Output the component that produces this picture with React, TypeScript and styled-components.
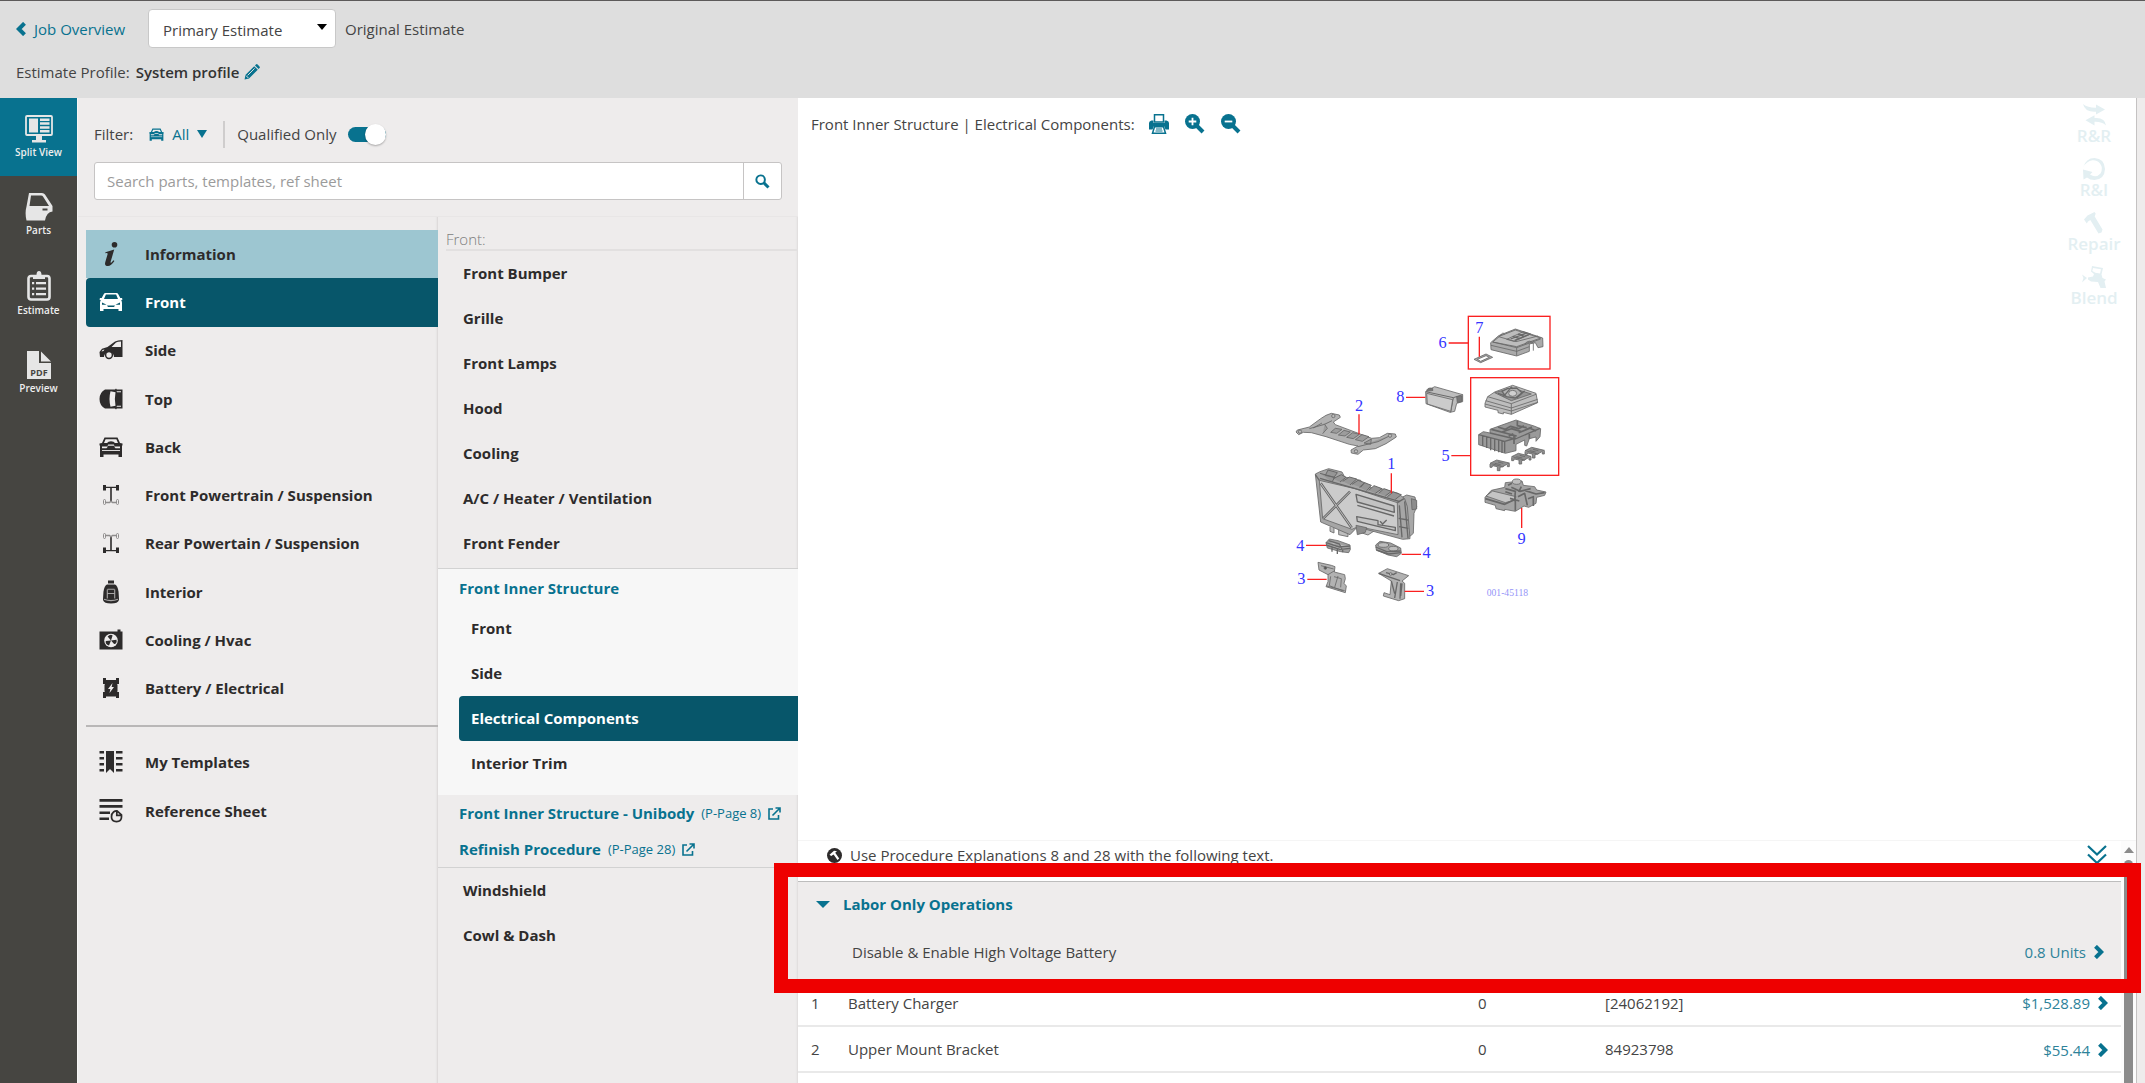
import React, { useState } from "react";
import styled, { createGlobalStyle, css } from "styled-components";

const c = {
  teal: "#08728f",
  tealDark: "#07566a",
  tealSoft: "#9dc6d1",
  panel: "#eeecec",
  header: "#dedede",
  rail: "#464541",
  text: "#444444",
  strong: "#2d2b2b",
  line: "#d2d2d2",
};

const Global = createGlobalStyle`
  * { box-sizing: border-box; }
  body { margin: 0; background: ${c.panel}; }
  body, button, input, select { font-family: "Open Sans", "Noto Sans", sans-serif; font-size: 15px; line-height: 20px; color: ${c.text}; }
  button { border: 0; background: none; padding: 0; cursor: pointer; text-align: left; }
  a { text-decoration: none; color: ${c.teal}; }
  ul { list-style: none; margin: 0; padding: 0; }
  svg { display: block; flex: none; }
`;

const Page = styled.div`
  display: flex;
  flex-direction: column;
  height: 100vh;
  overflow: hidden;
`;
const Header = styled.header`
  flex: none;
  height: 98px;
  padding: 8px 16px;
  background: ${c.header};
  border-top: 1px solid #5c5a5a;
`;
const HeaderRow = styled.div<{ $tall?: boolean }>`
  display: flex;
  align-items: center;
  height: ${(p) => (p.$tall ? 39 : 48)}px;
`;
const BackLink = styled.a`
  display: flex;
  align-items: center;
  gap: 8px;
  width: 132px;
`;
const SelectWrap = styled.label`
  position: relative;
  width: 188px;
  margin-right: 9px;
`;
const Select = styled.select`
  appearance: none;
  width: 100%;
  height: 39px;
  padding: 2px 14px 0;
  background: #fff;
  border: 1px solid #c8c8c8;
  border-radius: 4px;
`;
const SelectArrow = styled.span`
  position: absolute;
  right: 9px;
  top: 15px;
  border: 5px solid transparent;
  border-top: 6px solid #000;
  border-bottom: 0;
  pointer-events: none;
`;
const ProfileName = styled.strong`
  margin: 0 5px 0 6px;
  font-weight: 600;
  color: #333;
`;
const Body = styled.div`
  display: flex;
  flex: 1;
  min-height: 0;
`;
const Rail = styled.nav`
  flex: none;
  width: 78px;
  background: ${c.rail};
  border-right: 1px solid #f7f6f6;
`;
const RailButton = styled.button<{ $active?: boolean }>`
  display: flex;
  flex-direction: column;
  align-items: center;
  gap: 2px;
  width: 100%;
  padding: 17px 0;
  background: ${(p) => (p.$active ? c.teal : "transparent")};
  color: #eee;
  font-size: 10px;
  line-height: 14px;
  font-weight: 600;
`;
const Catalog = styled.section`
  display: flex;
  flex-direction: column;
  flex: none;
  width: 720px;
  background: ${c.panel};
`;
const Filters = styled.div`
  padding: 19px 16px 16px;
  border-bottom: 1px solid #e8e6e6;
`;
const FilterRow = styled.div`
  display: flex;
  align-items: center;
  height: 34px;
  margin-bottom: 11px;
`;
const FilterButton = styled.button`
  display: flex;
  align-items: center;
  gap: 8px;
  margin-left: 16px;
  color: ${c.teal};
`;
const Divider = styled.span`
  width: 2px;
  height: 27px;
  margin: 0 12px 0 16px;
  background: #cfcdcd;
`;
const SwitchLabel = styled.label`
  display: flex;
  align-items: center;
  gap: 11px;
`;
const Switch = styled.input`
  appearance: none;
  display: flex;
  align-items: center;
  width: 38px;
  height: 15px;
  margin: 0;
  border-radius: 8px;
  background: ${c.teal};
  &::after {
    content: "";
    width: 21px;
    height: 21px;
    border-radius: 50%;
    background: #fff;
    box-shadow: 0 1px 2px rgba(0, 0, 0, 0.3);
  }
  &:checked::after { margin-left: auto; }
  &:not(:checked) { background: #aaa; }
`;
const Search = styled.form`
  display: flex;
  height: 38px;
  background: #fff;
  border: 1px solid #c6c4c4;
  border-radius: 3px;
`;
const SearchInput = styled.input`
  flex: 1;
  min-width: 0;
  padding: 0 12px;
  border: 0;
  background: transparent;
  &::placeholder { color: #9b9b9b; opacity: 1; }
`;
const SearchButton = styled.button`
  display: flex;
  align-items: center;
  justify-content: center;
  width: 38px;
  border-left: 1px solid #c6c4c4;
`;
const Columns = styled.div`
  display: flex;
  flex: 1;
  min-height: 0;
`;
const GroupColumn = styled.nav`
  flex: none;
  width: 360px;
  padding: 13px 0 0 8px;
  box-shadow: inset -3px 0 2px -2px #d8d6d6;
`;
const GroupList = styled.ul<{ $second?: boolean }>`
  display: grid;
  grid-auto-rows: 1fr;
  height: ${(p) => (p.$second ? 98 : 483)}px;
`;
const GroupButton = styled.button<{ $tone?: string }>`
  display: flex;
  align-items: center;
  gap: 22px;
  width: 100%;
  height: 100%;
  padding: 0 0 1px 13px;
  font-weight: 700;
  color: ${c.strong};
  ${(p) => p.$tone === "soft" && css`background: ${c.tealSoft};`}
  ${(p) => p.$tone === "active" && css`background: ${c.tealDark}; color: #fff; border-radius: 4px 0 0 4px;`}
`;
const Rule = styled.hr`
  margin: 12px 0 11px;
  border: 0;
  height: 2px;
  background: #b9b7b7;
`;
const SectionColumn = styled.nav`
  flex: 1;
  min-width: 0;
  box-shadow: inset -3px 0 2px -2px #dddbdb;
`;
const Crumb = styled.div`
  margin: 12px 0 0 8px;
  border-bottom: 2px solid #e2e0e0;
  font-weight: 300;
  color: #7c7c7c;
`;
const SectionList = styled.div`
  padding-bottom: 2px;
`;
const SectionButton = styled.button<{ $sub?: boolean; $active?: boolean }>`
  display: block;
  width: ${(p) => (p.$sub ? "calc(100% - 21px)" : "100%")};
  height: 45px;
  margin-left: ${(p) => (p.$sub ? 21 : 0)}px;
  padding: 0 0 2px ${(p) => (p.$sub ? 12 : 25)}px;
  font-weight: 700;
  color: ${(p) => (p.$active ? "#fff" : c.strong)};
  background: ${(p) => (p.$active ? c.tealDark : "transparent")};
  border-radius: 4px 0 0 4px;
`;
const OpenSection = styled.div`
  padding-bottom: 9px;
  background: #f7f7f7;
  border-top: 1px solid ${c.line};
`;
const OpenTitle = styled.button`
  display: block;
  height: 37px;
  padding-left: 21px;
  font-weight: 700;
  color: ${c.teal};
`;
const Procedures = styled.div`
  display: flex;
  flex-direction: column;
  padding-left: 21px;
  border-bottom: 1px solid ${c.line};
`;
const ProcedureLink = styled.a`
  display: flex;
  align-items: center;
  gap: 7px;
  height: 36px;
  font-weight: 700;
`;
const PageRef = styled.span`
  font-size: 13px;
  font-weight: 400;
`;
const Detail = styled.main`
  display: flex;
  flex-direction: column;
  flex: 1;
  min-width: 0;
  margin-right: 8px;
  background: #fff;
  border-right: 1px solid #c4c2c2;
`;
const Viewer = styled.section`
  display: flex;
  flex: 1;
  min-height: 0;
`;
const Stage = styled.div`
  display: flex;
  flex-direction: column;
  flex: 1;
`;
const Toolbar = styled.div`
  display: flex;
  align-items: center;
  height: 52px;
  padding-left: 13px;
`;
const Tools = styled.div`
  display: flex;
  gap: 16px;
  margin-left: 14px;
`;
const Canvas = styled.div`
  display: flex;
  align-items: center;
  justify-content: center;
  flex: 1;
  padding-bottom: 80px;
`;
const Actions = styled.div`
  display: flex;
  flex-direction: column;
  width: 82px;
  padding: 6px 2px 0 0;
`;
const Action = styled.button`
  display: flex;
  flex-direction: column;
  align-items: center;
  height: 54px;
  font-weight: 600;
  font-size: 17px;
  color: #e3eff2;
`;
const Lower = styled.section`
  display: flex;
  flex: none;
  height: 243px;
  border-top: 1px solid #f5f5f5;
`;
const Lines = styled.div`
  flex: 1;
  min-width: 0;
  overflow: hidden;
`;
const Note = styled.div`
  display: flex;
  align-items: center;
  gap: 8px;
  height: 40px;
  padding: 0 14px 12px 29px;
`;
const NoteText = styled.span`
  flex: 1;
`;
const Labor = styled.div`
  height: 99px;
  background: ${c.panel};
  border-top: 1px solid #bdbdbd;
`;
const LaborTitle = styled.button`
  display: flex;
  align-items: center;
  gap: 13px;
  height: 44px;
  padding-left: 18px;
  font-weight: 700;
  color: ${c.teal};
`;
const LaborRow = styled.div`
  display: flex;
  align-items: center;
  justify-content: space-between;
  height: 52px;
  padding: 0 17px 0 54px;
`;
const Amount = styled.button`
  display: inline-flex;
  align-items: center;
  gap: 8px;
  color: #2d8299;
  vertical-align: middle;
`;
const Parts = styled.table`
  width: 100%;
  table-layout: fixed;
  border-collapse: collapse;
`;
const Cell = styled.td<{ $kind?: "num" | "name" | "price" }>`
  height: 46px;
  padding: 0;
  border-bottom: 2px solid #e9e9e9;
  ${(p) => p.$kind === "num" && css`padding-left: 13px;`}
  ${(p) => p.$kind === "name" && css`padding-left: 5px;`}
  ${(p) => p.$kind === "price" && css`padding-right: 13px; text-align: right;`}
`;
const Col = styled.col<{ $w?: string }>`
  width: ${(p) => p.$w || "auto"};
`;
const ScrollTrack = styled.div`
  display: flex;
  flex-direction: column;
  align-items: center;
  width: 15px;
  padding-top: 6px;
  background: #fcfcfc;
`;
const ScrollThumb = styled.div`
  flex: 1;
  width: 9px;
  margin-top: 7px;
  border-radius: 5px 5px 0 0;
  background: #8b8b8b;
`;
const Highlight = styled.div`
  position: absolute;
  left: 774px;
  right: 4px;
  bottom: 90px;
  height: 130px;
  border: 14px solid #ee0000;
  pointer-events: none;
`;

/* ---------- icons ---------- */

const Chevron = ({ left }: { left?: boolean }) => (
  <svg width="10" height="14" viewBox="0 0 10 14" fill="none" stroke={c.teal} strokeWidth="4">
    <path d={left ? "M8.5 1.3 2.8 7l5.7 5.7" : "M1.5 1.3 7.2 7l-5.7 5.7"} />
  </svg>
);
const Pencil = () => (
  <svg width="16" height="16" viewBox="0 0 16 16">
    <path fill={c.teal} d="M10.2 2.2 13.8 5.8 5 14.6 0.6 15.4 1.4 11z M11 1.4l.9-.9q.8-.8 1.7 0L15.500 2.400q.8.8 0 1.700l-.9.9z" />
    <path d="M3.600 11.400 10.600 4.400M2 11.600l2.400 2.400" stroke="#dedede" strokeWidth="1" fill="none" />
  </svg>
);
const Triangle = ({ w, h }: { w: number; h: number }) => (
  <svg width={w} height={h} viewBox="0 0 10 8" preserveAspectRatio="none">
    <path d="M0 0h10L5 8z" fill={c.teal} />
  </svg>
);
const CarBack = ({ size = 24 }: { size?: number }) => (
  <svg width={size} height={size} viewBox="0 0 24 24" fill="currentColor">
    <path fillRule="evenodd" d="M5.500 2.500h13l2.500 5.500 2.500.5v2H23V22h-3.500v-2.500h-15V22H1V10.500H.5v-2L3 8zM6.600 4.200 5 8h3q1-1.800 4-1.800T16 8h3l-1.600-3.800zM3 11.500v1.700h4.500l1.500-1.700zm12 0 1.500 1.700H21v-1.700zM9.200 9.500h5.600l.7 1.200h-7z" />
    <path d="M3 15.500h18" stroke={c.panel} strokeWidth=".9" />
  </svg>
);
const CarFront = () => (
  <svg width="24" height="24" viewBox="0 0 24 24" fill="currentColor">
    <path fillRule="evenodd" d="M6.500 3h11q1.200 0 1.800 1.200L21.300 8H23l.5 1.500-1.300.8Q23 11.500 23 13v8h-3.500v-2h-15v2H1v-8q0-1.500.8-2.700L.5 9.500 1 8h1.700l2-3.800Q5.300 3 6.500 3zm.4 1.600L5 9h14l-1.900-4.400zM3 12.600v2.200h4.600zM21 12.600v2.200h-4.600zM8 15.600l1 1.400h6l1-1.400z" />
  </svg>
);
const I = ({ children }: { children: React.ReactNode }) => (
  <svg width="24" height="24" viewBox="0 0 24 24" fill="currentColor">{children}</svg>
);
const Axle = ({ flip }: { flip?: boolean }) => (
  <I>
    <g transform={flip ? "rotate(180 12 12)" : undefined}>
      <path d="M4 2h3v5.500H4zM17 2h3v5.500h-3zM7 3.800h10v1.200H7z" />
      <path d="M11.200 4h1.600v14.500h-1.600z" />
      <g fill="none" stroke="#8f8d8d"><rect x="4.500" y="16.500" width="2" height="5" rx="1" /><rect x="17.500" y="16.500" width="2" height="5" rx="1" /><path d="M6.500 19.500h4l1.500-1.300 1.500 1.300h4" strokeWidth="1.400" /></g>
    </g>
  </I>
);
const icons: Record<string, React.ReactNode> = {
  Information: (
    <I><circle cx="15.500" cy="2.800" r="2.800" /><path d="M6.500 10.200 15.200 7.600 11.700 19.500q-.5 2 1 .7l1.800-2 .9.700Q12 24 9 24q-3.900 0-2.700-4L8.500 12.600q.5-1.700-1-1.500l-1.300.1z" /></I>
  ),
  Front: <CarFront />,
  Side: (
    <I>
      <path fillRule="evenodd" d="M.5 14 3 10.800 8.500 9 16 3.600Q18.500 2 23.500 2v17H15a5 5 0 0 0-10 0H1zM12.500 9H22V3.600q-3.500 0-5 1zM2.500 13.500l2-.5 1-1.500-2 .4z" />
      <circle cx="10" cy="17" r="3.400" fill="none" stroke="currentColor" strokeWidth="1.500" />
    </I>
  ),
  Top: (
    <I>
      <path fillRule="evenodd" d="M6 2.500h10l1-1 .8 1h5.700v19h-5.700l-.8 1-1-1H6Q.5 18.500.5 12T6 2.500zm5.500 1.800Q9.500 12 11.500 19.800l5-1Q15.200 12 16.500 5.200zm6 0 .5 1h4V4.300zm0 15.400.5-1h4v1z" />
    </I>
  ),
  Back: <CarBack />,
  "Front Powertrain / Suspension": <Axle />,
  "Rear Powertain / Suspension": <Axle flip />,
  Interior: (
    <I>
      <path d="M9 .5h6v3H9z" />
      <path fillRule="evenodd" d="M8 4.500h8q2.500 1 3.500 7l.5 7v1.500q-1 3.500-8 3.500t-8-3.500v-1.500l.5-7q1-6 3.500-7z" />
      <path d="M8.300 9.500v9M15.700 9.500v9M8.500 9.200h7M8.500 13.500h7M5 19.200q7 2.800 14 0" stroke="#a7a5a5" strokeWidth="1.100" fill="none" />
    </I>
  ),
  "Cooling / Hvac": (
    <I>
      <path d="M.5 3.500h18v-2h3v2h2v18H.500z" />
      <circle cx="12" cy="12.500" r="6.800" fill={c.panel} />
      <path d="M12 12.500 8.600 8.400q3-3 5-.900zM12 12.500l5.500-.8q.8 4-2.400 4.400zM12 12.500l-2 5q-4-1-3.200-4.400z" />
    </I>
  ),
  "Battery / Electrical": (
    <I>
      <path d="M4 2h3v6H4zM17 2h3v6h-3zM4 16h3v6H4zM17 16h3v6h-3zM7 4h10v2H7zM7 18h10v2.500H7z" />
      <path d="M6.800 6h10.400l1.300 3v6l-1.300 4H6.800l-1.300-4V9z" />
      <path d="M13.500 7 9 13h2.400L10.500 17 15 11h-2.400z" fill={c.panel} />
    </I>
  ),
  "My Templates": (
    <I>
      <path d="M7 1h8v22l-4-4-4 4zM.5 1H5v2.500H.5zM.5 7H5v2.500H.5zM.5 13H5v2.500H.5zM.5 19H5v2.500H.5zM17 1h6.500v2.500H17zM17 7h6.500v2.500H17zM17 13h6.500v2.500H17zM17 19h6.500v2.500H17z" />
    </I>
  ),
  "Reference Sheet": (
    <I>
      <path d="M.5 0h23v2.800H.5zM.5 6h23v2.800H.5zM.5 12.500H11V15H.5zM.5 18.500H10V21H.5z" />
      <path d="M14.500 13q1.600-1.300 3.500-1.200l4.500 4V18q0 4.500-5 4.700-5-.2-5-4.700 0-3.600 2-5zM17.800 12v4.300h4.500" fill="none" stroke="currentColor" strokeWidth="1.700" />
    </I>
  ),
};
const SplitIcon = () => (
  <svg width="28" height="28" viewBox="0 0 28 28">
    <rect x="1" y="1" width="26" height="19" rx="1" fill="none" stroke="#e6e6e6" strokeWidth="1.800" />
    <path d="M4 3.500h9v14H4zM15 3.500h9.500V6H15zM15 7.300h9.500v2.500H15zM15 11.200h9.500v2.500H15zM15 15h9.500v2.500H15zM11 20.500h6V25h4v2.500H7V25h4z" fill="#e6e6e6" />
  </svg>
);
const DoorIcon = () => (
  <svg width="28" height="28" viewBox="0 0 28 28">
    <path fill="#e6e6e6" fillRule="evenodd" d="M4 0h13q2 0 3 1.500L27.500 13v5.500q-6 .5-7.500 9H1.500Q-.3 20 1.500 13.500zM6 2.500 4.500 13H24L18 3.500q-.5-1-2-1zM17.500 15.500v2h5v-2z" />
  </svg>
);
const ClipboardIcon = () => (
  <svg width="26" height="30" viewBox="0 0 26 30">
    <rect x="2.500" y="5" width="21" height="23.500" rx="2.500" fill="none" stroke="#e6e6e6" strokeWidth="2.600" />
    <path fill="#e6e6e6" d="M7 8V4h3.500q0-4 2.500-4t2.500 4H19v4zM6 11h2.200v2.200H6zM10 11h10v2.200H10zM6 16.500h2.200v2.200H6zM10 16.500h10v2.200H10zM6 22h2.200v2.200H6zM10 22h10v2.200H10z" />
  </svg>
);
const PdfIcon = () => (
  <svg width="24" height="28" viewBox="0 0 24 28">
    <path fill="#e6e6e6" d="M0 0h12v12h12v16H0zM14 .5 24 10.500H14z" />
    <text x="12" y="24.500" textAnchor="middle" fontFamily="Open Sans" fontWeight="700" fontSize="9" fill={c.rail}>PDF</text>
  </svg>
);
const Magnifier = ({ sign }: { sign?: "+" | "-" }) => {
  const s = sign ? 20 : 15;
  return (
    <svg width={s} height={s} viewBox="0 0 20 20">
      <circle cx="7.500" cy="7.500" r={sign ? 7.5 : 5.7} fill={sign ? c.teal : "none"} stroke={sign ? "none" : c.teal} strokeWidth="2.600" />
      <path d="M11.500 11.500 18 18" stroke={c.teal} strokeWidth="4" />
      {sign && <path d={sign === "+" ? "M3.700 7.500h7.600M7.500 3.700v7.600" : "M3.700 7.500h7.600"} stroke="#fff" strokeWidth="1.800" />}
    </svg>
  );
};
const Printer = () => (
  <svg width="20" height="20" viewBox="0 0 20 20">
    <path d="M5.500.8h9V8h-9z" fill="#fff" stroke={c.teal} strokeWidth="1.500" />
    <path d="M2.500 6.500h2V9h11V6.500h2Q20 7 20 9v6.500h-3.500L15 12H5l-1.500 3.500H0V9q0-2 2.500-2.500z" fill={c.teal} />
    <path d="M5.500 12.800h9l2 6.400h-13z" fill="#fff" stroke={c.teal} strokeWidth="1.500" />
    <path d="M7 15h6M6.500 17h7" stroke={c.teal} />
  </svg>
);
const External = () => (
  <svg width="13" height="13" viewBox="0 0 13 13" fill="none" stroke={c.teal} strokeWidth="1.600">
    <path d="M5 2H1v10h9.500V8M4.500 8.500 11.500 1.500M7.500 1H12v4.500" />
  </svg>
);
const NoteIcon = () => (
  <svg width="15" height="15" viewBox="0 0 15 15">
    <circle cx="7.500" cy="7.500" r="7.500" fill="#2d2b2b" />
    <path d="M2.500 6.800 7 2.800l3 .4-1.800 1.600 4 5.700-1.700 1.500L6.600 6.400 4.200 8z" fill="#fff" />
  </svg>
);
const actionIcons: Record<string, React.ReactNode> = {
  "R&R": <path d="M1 0Q6 4 14 3.800V0.500L23 5.500 14 10.500V7.800Q3 8.500 1 0zM24 21.500Q20 17.500 12.500 17.800V21.500L3.500 16.300 12.500 11.200V14Q23 13 24 21.500z" />,
  "R&I": <path d="M1 9.500Q4 0 12.500 0 22.500.5 23 11 22.500 21.500 12.500 22 8 22 5 19.500L1.500 21.500 1 11.500 10.500 14 8 16.500Q14 20.500 18.500 15.500 21.500 10 18 5.500 15 2 10.500 2.300 4.500 3 1 9.500z" />,
  Repair: <path d="M2 7.500 5.500 3.500 12.500 0l1.200 1.500-1 3L20.500 17.500 19.500 20.500 16.500 21.500 8.300 8 6 9.500 4.800 11.500z" />,
  Blend: <path d="M10 0 21 2 19.500 8.500 20.500 12 24 13.500 22.500 15.500 24 22 18.500 22 16 16 9 15.500 6 13.500V11.500L11 10.500 12 8 9 5.500zM11 2l-.7 3 3 1.700 4.700.8L19 3.300zM0 8.500 5 12 0 16.500 1.500 12z" fillRule="evenodd" />,
};

/* ---------- exploded parts drawing ---------- */

const Num = ({ x, y, n }: { x: number; y: number; n: string }) => (
  <text x={x} y={y} textAnchor="middle" fontFamily="Liberation Serif, serif" fontSize="49" fill="#3535ff">{n}</text>
);
const Clip = ({ x, y }: { x: number; y: number }) => (
  <g transform={`translate(${x} ${y})`} fill="#8f8f8f">
    <path d="M0 12 0 22 6 22 8 17 22 20 22 32 30 32 30 22 40 20V13M58 10v10h-6v-6" />
    <path d="M0 10 20 0l38 9-20 11z" /><path d="M14 10l18 4M24 6l16 4" />
  </g>
);
const Diagram = () => (
  <svg width="320" height="310" viewBox="-12 0 960 930" role="img" aria-label="Electrical components diagram">
    <g fill="#bdbdbd" stroke="#686868" strokeWidth="2.500" strokeLinejoin="round">
      {/* upper mount bracket */}
      <path d="M78 396 82 390 118 381 152 356 168 346 184 340 208 345 211 352 190 366 196 374 305 415 328 413 352 400 376 402 379 411 348 431 316 446 280 450 264 463 244 459 243 450 264 438 238 433 168 410 124 398 100 397 86 404z" fill="#b2b2b2" />
      <path d="M118 386 164 373 186 362M164 373l8 12-14 16M196 385l-14 12 18 3 16-12zM222 391l-17 14 20 3 16-12zM248 398l-18 14 20 4 18-13zM276 404l-20 15 21 5 20-14zM304 417l-22 12 20 4zM264 440l60-15 40-20M130 384l26-15" fill="#9c9c9c" />
      <circle cx="190" cy="348" r="5" /><circle cx="360" cy="407" r="5" /><circle cx="90" cy="395" r="5" /><circle cx="258" cy="454" r="5" />

      {/* battery charger */}
      <path d="M180 680v14l12 5v-15M206 688v16l28 6v-20M264 695l30 10 18-12v-20" />
      <path d="M386 597 410 585 435 591 440 620 432 640 430 700 412 716 384 706z" fill="#a8a8a8" />
      <path d="M136 522 150 515 176 506 216 516 224 531 272 541 288 562 330 565 384 580 404 596 412 620 420 716 398 718 262 681 240 704 152 666z" fill="#a6a6a6" />
      <path d="M148 541 255 566 382 608 384 704 264 680 246 688 158 656z" fill="#cbcbcb" />
      <path d="M148 541 136 524M382 608l20-12M388 616l8 96M404 604l10 110M386 655l28 5M387 680l28 5" strokeWidth="4" />
      <path d="M152 550 245 683M240 575 160 655" strokeWidth="8" />
      <path d="M152 550 245 683M240 575 160 655" stroke="#bebebe" strokeWidth="3" />
      <path d="M258 583 372 618 373 637 262 606zM262 616 372 648M260 650 324 662 324 674 376 682 376 692 262 664zM330 664l8 8 12-12" fill="#c2c2c2" strokeWidth="4" />
      <path d="M150 520l44 12-8 14M174 510l-8 16 26 6 10-14zM190 536l24-12 14 8-18 14M218 544l20-13 22 6-20 18M246 553l18-12 20 7-12 14M268 562l16-14 20 8-14 16M296 571l16-14 24 9-20 14M326 580l16-14 22 8-18 14M352 590l18-14 24 8-18 14" fill="#969696" strokeWidth="3" />
      <path d="M150 535 390 605" strokeWidth="4" />
      <path d="M258 676 290 683 286 697 262 704zM424 596l16 5v26l-14 2z" fill="#8c8c8c" />

      {/* isolators */}
      <path d="M168 728 178 717 204 722 240 735 241 748 236 758 212 755 172 744z" fill="#a0a0a0" />
      <path d="M168 728 208 741 240 738M176 722l32 10 8 15M186 741v14M202 745v17M218 747v10M168 735l42 13 30-3" strokeWidth="4" />
      <path d="M317 735 330 724 362 729 392 744 394 760 380 770 354 765 319 750z" fill="#a0a0a0" />
      <ellipse cx="340" cy="735" rx="16" ry="7" /><ellipse cx="370" cy="746" rx="14" ry="7" />
      <path d="M317 741 350 755 392 753M319 750l36 12 38-4" fill="none" strokeWidth="4" />

      {/* lower brackets */}
      <path d="M144 787 184 796 195 800 193 816 224 824 226 836 222 850 229 858 226 878 168 860 174 845 174 824 147 810z" fill="#b2b2b2" />
      <path d="M153 797l38 10M174 824l20-12M182 829l-4 28 42 16M192 830l22 6-2 26M170 858l54 14M204 828l-10 34" fill="none" /><circle cx="166" cy="804" r="4" fill="#555" />
      <path d="M326 820 352 806 416 827 396 843 404 850 404 896 386 902 340 888 342 878 360 884 364 843z" fill="#b2b2b2" />
      <path d="M326 820 390 842M364 843l10 38M382 846l-8 48M392 850l-2 46M396 850l-4 38M348 818l22 6 10-6" fill="none" strokeWidth="4" /><circle cx="362" cy="822" r="4" />

      {/* module 8 */}
      <path d="M467 275 494 260 578 284 578 305 560 310 554 334 540 337 468 311z" />
      <path d="M467 275 550 293 578 284M550 293l-8 44" strokeWidth="3" /><path d="M470 280 548 299 542 334 472 312z" fill="#cbcbcb" />
      <path d="M470 275q0-14 18-10v8M560 290l16-2v16l-14 4z" fill="#777" />

      {/* cover 6 */}
      <path d="M662 128 686 107 736 87 818 114 819 140 804 143 796 128 778 132 778 154 740 168 663 149z" fill="#aaaaaa" />
      <path d="M668 126 690 108 736 90 812 114 740 140z" />
      <path d="M668 126 740 143 812 117M663 136 740 154 778 140M740 143v24M686 110l52 15 66-17M690 108q8-14 14-5M764 132q14-16 26-2v22M710 118l50-23 22 7-50 22z" fill="none" />
      <path d="M722 117l48-18M734 121l42-17M728 109l22 7M744 103l20 6" strokeWidth="4" />
      <path d="M612 178 648 162 668 172 632 188zM622 178l26-11 10 5-26 12z" fill="#aaa" fillRule="evenodd" />

      {/* fuse block 5 */}
      <path d="M645 310 653 290 674 276 728 256 798 280 803 308 724 343 700 337 700 342 684 338 684 331 645 321z" />
      <path d="M653 290 724 311 798 283M647 302 724 324 803 298M645 312l79 21 79-26M724 311v32" fill="none" />
      <path d="M674 278l52-14 58 18-60 20z" fill="#969696" />
      <path d="M684 280l26 9M696 274l12 16 28 4 20-16-16-14-28 2zM700 290l26-30M740 294l24-22" fill="#b2b2b2" strokeWidth="4" />
      <ellipse cx="728" cy="280" rx="12" ry="9" fill="#d0d0d0" />
      <path d="M626 404 640 395 660 399 660 388 738 360 760 368 792 378 812 386 810 410 798 424 798 411 778 416 770 438 764 436 764 420 738 433 738 452 706 460 626 434z" fill="#9a9a9a" />
      <path d="M626 404 704 424 738 414M660 399l76 18 74-32M704 424v34M638 408v30M650 412v32M662 415v36M674 418v36M686 421v36M696 423v36" fill="none" strokeWidth="4" />
      <path d="M664 388l76 20M684 381l22 7 16-9 24 7 16-9M694 397l30-11 30 9 32-14M742 363v14l28 6M746 398l34-13 18 8M716 409l14-8M732 432v-24M778 416v-14" fill="none" strokeWidth="5" />
      <Clip x={660} y={480} /><Clip x={725} y={460} /><Clip x={765} y={442} />

      {/* base 9 */}
      <path d="M645 592 664 571 704 562 706 548 756 543 760 556 794 560 800 570 828 576 824 586 800 592 798 610 776 622 762 618 736 634 704 628 704 632 678 626 676 616 645 607z" fill="#a4a4a4" />
      <path d="M648 588 668 573 738 590 734 600 706 608z" fill="#c4c4c4" />
      <ellipse cx="740" cy="545" rx="13" ry="8" />
      <path d="M646 596 704 613 736 598 736 632M706 566l30 8-2 30M724 562l26 12 32-8M744 590l20-10 8 36M766 572l32 10 26-4M774 596l16-6v28M754 560l-8 16M714 556l12-6M706 575l20 7M720 595l28 8" fill="none" strokeWidth="5" />
    </g>
    <g fill="none" stroke="#fa2020" strokeWidth="4">
      <rect x="595" y="49" width="245" height="158" />
      <rect x="602" y="233" width="264" height="293" />
      <path d="M536 129h58M628 110v60M408 292h58M267 343v60M544 467h58M364 520v60M108 736h60M395 763h58M112 838h58M404 874h58M755 624v60" />
    </g>
    <Num x={518} y={145} n="6" /><Num x={628} y={99} n="7" /><Num x={391} y={307} n="8" />
    <Num x={267} y={332} n="2" /><Num x={527} y={484} n="5" /><Num x={364} y={507} n="1" />
    <Num x={91} y={752} n="4" /><Num x={470} y={775} n="4" /><Num x={94} y={853} n="3" />
    <Num x={480} y={889} n="3" /><Num x={755} y={731} n="9" />
    <text x="650" y="888" fontFamily="Liberation Serif, serif" fontSize="29" fill="#9494f8">001-45118</text>
  </svg>
);

/* ---------- data ---------- */

const groups = ["Information", "Front", "Side", "Top", "Back", "Front Powertrain / Suspension", "Rear Powertain / Suspension", "Interior", "Cooling / Hvac", "Battery / Electrical"];
const sections = ["Front Bumper", "Grille", "Front Lamps", "Hood", "Cooling", "A/C / Heater / Ventilation", "Front Fender"];
const subs = ["Front", "Side", "Electrical Components", "Interior Trim"];
const parts = [
  { n: 1, name: "Battery Charger", qty: 0, no: "[24062192]", price: "$1,528.89" },
  { n: 2, name: "Upper Mount Bracket", qty: 0, no: "84923798", price: "$55.44" },
];

const GroupItem = ({ name, tone }: { name: string; tone?: string }) => (
  <li><GroupButton $tone={tone}>{icons[name]}{name}</GroupButton></li>
);

export default function App() {
  const [qualified, setQualified] = useState(true);
  const [sub, setSub] = useState("Electrical Components");
  return (
    <Page>
      <Global />
      <Header>
        <HeaderRow $tall>
          <BackLink href="#"><Chevron left />Job Overview</BackLink>
          <SelectWrap>
            <Select aria-label="Estimate"><option>Primary Estimate</option></Select>
            <SelectArrow />
          </SelectWrap>
          <span>Original Estimate</span>
        </HeaderRow>
        <HeaderRow>
          <span>Estimate Profile:</span>
          <ProfileName>System profile</ProfileName>
          <button aria-label="Edit profile"><Pencil /></button>
        </HeaderRow>
      </Header>
      <Body>
        <Rail>
          <RailButton $active><SplitIcon />Split View</RailButton>
          <RailButton><DoorIcon />Parts</RailButton>
          <RailButton><ClipboardIcon />Estimate</RailButton>
          <RailButton><PdfIcon />Preview</RailButton>
        </Rail>
        <Catalog>
          <Filters>
            <FilterRow>
              <span>Filter:</span>
              <FilterButton><CarBack size={15} />All<Triangle w={10} h={8} /></FilterButton>
              <Divider />
              <SwitchLabel>
                Qualified Only
                <Switch type="checkbox" checked={qualified} onChange={(e) => setQualified(e.target.checked)} />
              </SwitchLabel>
            </FilterRow>
            <Search onSubmit={(e) => e.preventDefault()}>
              <SearchInput aria-label="Search" placeholder="Search parts, templates, ref sheet" />
              <SearchButton aria-label="Search"><Magnifier /></SearchButton>
            </Search>
          </Filters>
          <Columns>
            <GroupColumn>
              <GroupList>
                {groups.map((g) => (
                  <GroupItem key={g} name={g} tone={g === "Information" ? "soft" : g === "Front" ? "active" : undefined} />
                ))}
              </GroupList>
              <Rule />
              <GroupList $second>
                <GroupItem name="My Templates" />
                <GroupItem name="Reference Sheet" />
              </GroupList>
            </GroupColumn>
            <SectionColumn>
              <Crumb>Front:</Crumb>
              <SectionList>
                {sections.map((s) => <SectionButton key={s}>{s}</SectionButton>)}
              </SectionList>
              <OpenSection>
                <OpenTitle>Front Inner Structure</OpenTitle>
                {subs.map((s) => (
                  <SectionButton key={s} $sub $active={s === sub} onClick={() => setSub(s)}>{s}</SectionButton>
                ))}
              </OpenSection>
              <Procedures>
                <ProcedureLink href="#">Front Inner Structure - Unibody<PageRef>(P-Page 8)</PageRef><External /></ProcedureLink>
                <ProcedureLink href="#">Refinish Procedure<PageRef>(P-Page 28)</PageRef><External /></ProcedureLink>
              </Procedures>
              <SectionButton>Windshield</SectionButton>
              <SectionButton>Cowl &amp; Dash</SectionButton>
            </SectionColumn>
          </Columns>
        </Catalog>
        <Detail>
          <Viewer>
            <Stage>
              <Toolbar>
                <span>Front Inner Structure | Electrical Components:</span>
                <Tools>
                  <button aria-label="Print"><Printer /></button>
                  <button aria-label="Zoom in"><Magnifier sign="+" /></button>
                  <button aria-label="Zoom out"><Magnifier sign="-" /></button>
                </Tools>
              </Toolbar>
              <Canvas><Diagram /></Canvas>
            </Stage>
            <Actions>
              {Object.keys(actionIcons).map((a) => (
                <Action key={a}>
                  <svg width="24" height="22" viewBox="0 0 24 22" fill="currentColor">{actionIcons[a]}</svg>
                  {a}
                </Action>
              ))}
            </Actions>
          </Viewer>
          <Lower>
            <Lines>
              <Note>
                <NoteIcon />
                <NoteText>Use Procedure Explanations 8 and 28 with the following text.</NoteText>
                <button aria-label="Collapse">
                  <svg width="20" height="20" viewBox="0 0 20 20" fill="none" stroke={c.teal} strokeWidth="2.200"><path d="M1 1l9 8.500L19 1M1 9.500 10 18l9-8.500" /></svg>
                </button>
              </Note>
              <Labor>
                <LaborTitle><Triangle w={14} h={7} />Labor Only Operations</LaborTitle>
                <LaborRow>
                  <span>Disable &amp; Enable High Voltage Battery</span>
                  <Amount>0.8 Units<Chevron /></Amount>
                </LaborRow>
              </Labor>
              <Parts>
                <colgroup><Col $w="45px" /><Col $w="48%" /><Col $w="127px" /><Col /><Col $w="200px" /></colgroup>
                <tbody>
                  {parts.map((p) => (
                    <tr key={p.n}>
                      <Cell $kind="num">{p.n}</Cell>
                      <Cell $kind="name">{p.name}</Cell>
                      <Cell>{p.qty}</Cell>
                      <Cell>{p.no}</Cell>
                      <Cell $kind="price"><Amount>{p.price}<Chevron /></Amount></Cell>
                    </tr>
                  ))}
                </tbody>
              </Parts>
            </Lines>
            <ScrollTrack>
              <svg width="10" height="6" viewBox="0 0 10 6"><path d="M5 0l5 6H0z" fill="#8b8b8b" /></svg>
              <ScrollThumb />
            </ScrollTrack>
          </Lower>
        </Detail>
      </Body>
      <Highlight />
    </Page>
  );
}
